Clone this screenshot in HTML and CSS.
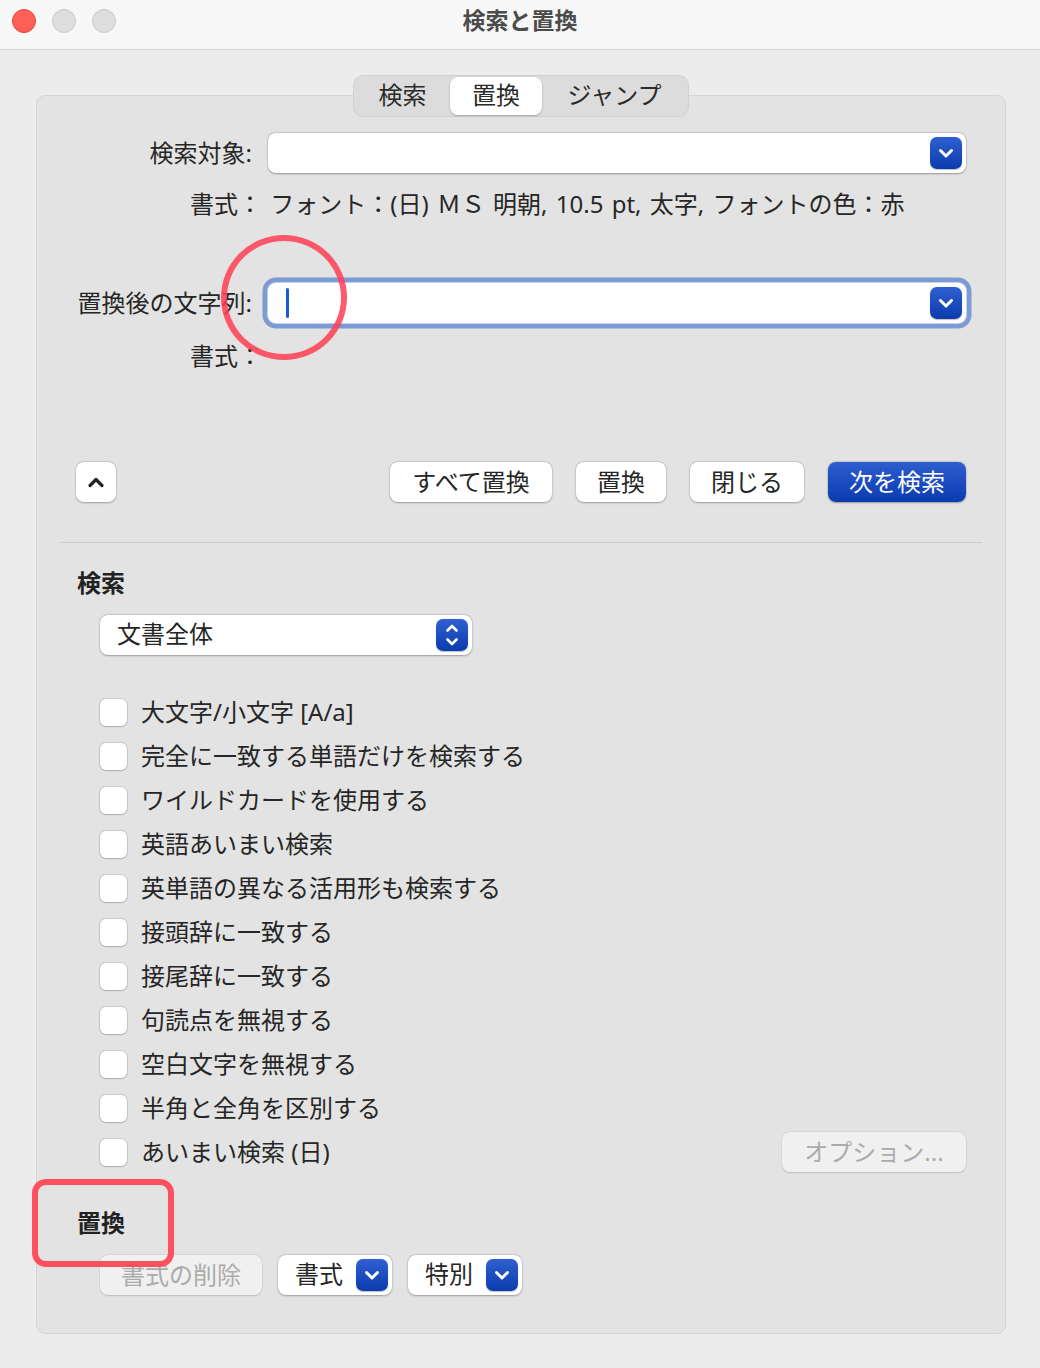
FILE: index.html
```html
<!DOCTYPE html>
<html lang="ja">
<head>
<meta charset="utf-8">
<title>検索と置換</title>
<link rel="stylesheet" href="styles.css">
</head>
<body>
<div class="window">
  <header class="titlebar">
    <div class="lights">
      <span class="light red"></span>
      <span class="light grey"></span>
      <span class="light grey"></span>
    </div>
    <div class="title">検索と置換</div>
    <div></div>
  </header>

  <main class="content">
    <nav class="tabs">
      <span class="tab t1">検索</span>
      <span class="tab t2 active">置換</span>
      <span class="tab t3">ジャンプ</span>
    </nav>

    <section class="panel">
      <div class="form-row first">
        <div class="flabel">検索対象:</div>
        <div class="combo">
          <span class="bbtn"><svg viewBox="0 0 32 32" width="32" height="32"><path d="M10.5 13.5 L16 19 L21.5 13.5" fill="none" stroke="#fff" stroke-width="3" stroke-linecap="round" stroke-linejoin="round"/></svg></span>
        </div>
      </div>
      <div class="fmt">書式： フォント：(日) ＭＳ 明朝, 10.5 pt, 太字, フォントの色：赤</div>

      <div class="form-row second">
        <div class="flabel">置換後の文字列:</div>
        <div class="combo focused">
          <span class="caret"></span>
          <span class="bbtn"><svg viewBox="0 0 32 32" width="32" height="32"><path d="M10.5 13.5 L16 19 L21.5 13.5" fill="none" stroke="#fff" stroke-width="3" stroke-linecap="round" stroke-linejoin="round"/></svg></span>
        </div>
      </div>
      <div class="fmt fmt2">書式：</div>

      <div class="actions">
        <button class="btn chev"><svg viewBox="0 0 40 40" width="40" height="40"><path d="M14 23.5 L20 17.5 L26 23.5" fill="none" stroke="#222" stroke-width="3.2" stroke-linecap="round" stroke-linejoin="round"/></svg></button>
        <div class="action-btns">
          <button class="btn w-all">すべて置換</button>
          <button class="btn w-rep">置換</button>
          <button class="btn w-close">閉じる</button>
          <button class="btn primary w-next">次を検索</button>
        </div>
      </div>

      <div class="sep"></div>

      <h2 class="sec-title">検索</h2>
      <div class="popup">
        <span class="popup-text">文書全体</span>
        <span class="bbtn"><svg viewBox="0 0 32 32" width="32" height="32"><path d="M11.5 11.5 L16 7 L20.5 11.5 M11.5 20.5 L16 25 L20.5 20.5" fill="none" stroke="#fff" stroke-width="2.6" stroke-linecap="round" stroke-linejoin="round"/></svg></span>
      </div>

      <ul class="checks">
        <li><span class="cb"></span>大文字/小文字 [A/a]</li>
        <li><span class="cb"></span>完全に一致する単語だけを検索する</li>
        <li><span class="cb"></span>ワイルドカードを使用する</li>
        <li><span class="cb"></span>英語あいまい検索</li>
        <li><span class="cb"></span>英単語の異なる活用形も検索する</li>
        <li><span class="cb"></span>接頭辞に一致する</li>
        <li><span class="cb"></span>接尾辞に一致する</li>
        <li><span class="cb"></span>句読点を無視する</li>
        <li><span class="cb"></span>空白文字を無視する</li>
        <li><span class="cb"></span>半角と全角を区別する</li>
        <li><span class="cb"></span>あいまい検索 (日)<button class="btn disabled options">オプション...</button></li>
      </ul>

      <h2 class="sec-title replace-title">置換</h2>
      <div class="bottom-row">
        <button class="btn disabled w-all">書式の削除</button>
        <div class="popup small">
          <span class="popup-text">書式</span>
          <span class="bbtn"><svg viewBox="0 0 32 32" width="32" height="32"><path d="M10.5 13.5 L16 19 L21.5 13.5" fill="none" stroke="#fff" stroke-width="3" stroke-linecap="round" stroke-linejoin="round"/></svg></span>
        </div>
        <div class="popup small">
          <span class="popup-text">特別</span>
          <span class="bbtn"><svg viewBox="0 0 32 32" width="32" height="32"><path d="M10.5 13.5 L16 19 L21.5 13.5" fill="none" stroke="#fff" stroke-width="3" stroke-linecap="round" stroke-linejoin="round"/></svg></span>
        </div>
      </div>
    </section>
  </main>

  <div class="mark-circle"></div>
  <div class="mark-rect"></div>
</div>
</body>
</html>
```

FILE: styles.css
```css
* { box-sizing: border-box; }

body {
  margin: 0;
  font-family: "Noto Sans", "Noto Sans CJK JP", sans-serif;
  color: #262626;
  background: #ececec;
}

.window {
  position: relative;
  width: 1040px;
  height: 1368px;
  background: #ececec;
  overflow: hidden;
}

/* title bar */
.titlebar {
  height: 50px;
  background: #f7f7f7;
  border-bottom: 1px solid #d4d4d4;
  display: grid;
  grid-template-columns: 1fr auto 1fr;
  align-items: start;
}

.lights {
  display: flex;
  gap: 16px;
  padding: 9px 0 0 12px;
}

.light {
  width: 24px;
  height: 24px;
  border-radius: 50%;
}

.light.red {
  background: #ff5f57;
  border: 1px solid #e2463f;
}

.light.grey {
  background: #dedede;
  border: 1px solid #cacaca;
}

.title {
  font-size: 23px;
  font-weight: bold;
  line-height: 40px;
  color: #4b4b4b;
}

/* content */
.content {
  padding: 25px 34px 0 36px;
}

.tabs {
  position: relative;
  z-index: 1;
  display: flex;
  width: fit-content;
  margin: 0 auto;
  height: 42px;
  padding: 1px;
  background: #dcdcdc;
  border: 1px solid #d1d1d1;
  border-radius: 10px;
}

.tab {
  height: 38px;
  line-height: 36px;
  font-size: 24px;
  text-align: center;
  border-radius: 8px;
  color: #2a2a2a;
}

.tab.t1 { width: 95px; }
.tab.t2 { width: 92px; }
.tab.t3 { width: 145px; }

.tab.active {
  background: #fff;
  box-shadow: 0 1px 2px rgba(0, 0, 0, 0.22), 0 0 0 0.5px rgba(0, 0, 0, 0.06);
}

.panel {
  margin-top: -22px;
  background: #e3e3e3;
  border: 1px solid #d4d4d4;
  border-radius: 9px;
  padding: 37px 0 38px 0;
}

/* form rows */
.form-row {
  display: grid;
  grid-template-columns: 215px 1fr;
  column-gap: 16px;
  align-items: center;
  padding-right: 39px;
}

.form-row.second {
  margin-top: 62px;
}

.flabel {
  text-align: right;
  font-size: 24px;
  line-height: 30px;
}

.combo {
  height: 40px;
  background: #fff;
  border-radius: 8px;
  box-shadow: 0 0.5px 2px rgba(0, 0, 0, 0.3), 0 0 0 0.5px rgba(0, 0, 0, 0.1);
  display: flex;
  align-items: center;
  padding: 0 4px 0 18px;
}

.combo.focused {
  box-shadow: 0 0 0 1px #c4d2ec, 0 0 0 5.5px #7d9bd3;
}

.caret {
  width: 3px;
  height: 30px;
  background: #1d5ad6;
  border-radius: 2px;
}

.bbtn {
  margin-left: auto;
  width: 32px;
  height: 32px;
  border-radius: 7px;
  background: linear-gradient(#2f5fd1, #0b3cad);
  box-shadow: 0 0.5px 1px rgba(0, 0, 0, 0.25);
  display: flex;
}

.fmt {
  margin-top: 16px;
  padding-left: 153px;
  font-size: 24px;
  line-height: 30px;
  height: 32px;
  white-space: pre;
  word-spacing: 2px;
}

.fmt2 {
  margin-top: 18px;
}

/* buttons */
.btn {
  font-family: inherit;
  font-size: 24px;
  line-height: 38px;
  height: 40px;
  padding: 0 21px;
  border: none;
  border-radius: 8px;
  background: #fff;
  color: #262626;
  box-shadow: 0 0.5px 2px rgba(0, 0, 0, 0.3), 0 0 0 0.5px rgba(0, 0, 0, 0.08);
}

.btn.w-all { width: 162px; padding: 0; }
.btn.w-rep { width: 90px; padding: 0; }
.btn.w-close { width: 114px; padding: 0; }
.btn.w-next { width: 138px; padding: 0; }

.btn.primary {
  background: linear-gradient(#2d5dcf, #0b3caf);
  color: #fff;
}

.btn.disabled {
  background: #f0f0f0;
  color: #ababab;
  box-shadow: 0 0.5px 1.5px rgba(0, 0, 0, 0.15), 0 0 0 0.5px rgba(0, 0, 0, 0.05);
}

.actions {
  margin-top: 89px;
  display: flex;
  align-items: center;
  padding: 0 39px;
}

.btn.chev {
  width: 40px;
  padding: 0;
  display: flex;
}

.action-btns {
  margin-left: auto;
  display: flex;
  gap: 24px;
}

.sep {
  margin: 40px 23px 0;
  height: 1px;
  background: #cdcdcd;
}

.sec-title {
  margin: 25px 0 0;
  padding-left: 40px;
  font-size: 24px;
  font-weight: bold;
  line-height: 30px;
  height: 32px;
  color: #222;
}

.popup {
  margin: 15px 0 0 63px;
  width: 372px;
  height: 40px;
  background: #fff;
  border-radius: 8px;
  box-shadow: 0 0.5px 2px rgba(0, 0, 0, 0.3), 0 0 0 0.5px rgba(0, 0, 0, 0.08);
  display: flex;
  align-items: center;
  padding: 0 4px 0 17px;
}

.popup-text {
  font-size: 24px;
  line-height: 30px;
  margin-bottom: 2px;
}

.checks {
  list-style: none;
  margin: 35px 0 0;
  padding: 0 39px 0 63px;
}

.checks li {
  height: 44px;
  display: flex;
  align-items: center;
  font-size: 24px;
  line-height: 30px;
}

.cb {
  width: 27px;
  height: 27px;
  margin-right: 14px;
  background: #fff;
  border-radius: 6px;
  box-shadow: 0 0 0 1px rgba(0, 0, 0, 0.1), 0 1px 1.5px rgba(0, 0, 0, 0.15);
}

.btn.options {
  margin-left: auto;
  width: 184px;
  padding: 0;
}

.replace-title {
  margin-top: 34px;
}

.bottom-row {
  margin-top: 15px;
  padding-left: 63px;
  display: flex;
  gap: 16px;
}

.bottom-row .popup {
  margin: 0;
}

.popup.small {
  width: 114px;
}

/* annotations */
.mark-circle {
  position: absolute;
  left: 221px;
  top: 235px;
  width: 126px;
  height: 125px;
  border: 6px solid rgba(255, 62, 82, 0.85);
  border-radius: 50%;
}

.mark-rect {
  position: absolute;
  left: 32px;
  top: 1179px;
  width: 142px;
  height: 88px;
  border: 6px solid rgba(255, 72, 86, 0.95);
  border-radius: 14px;
}
```
